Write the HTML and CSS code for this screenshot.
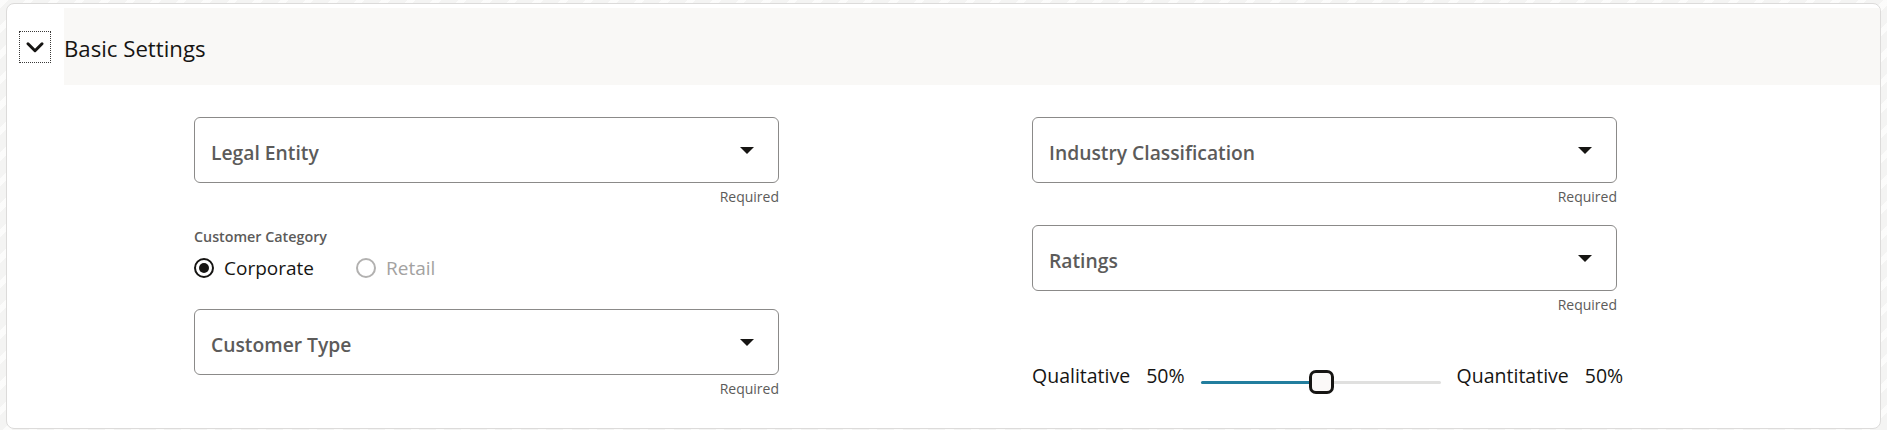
FILE: index.html
```html
<!DOCTYPE html>
<html lang="en">
<head>
<meta charset="utf-8">
<title>Basic Settings</title>
<link rel="stylesheet" href="styles.css">
</head>
<body>
<div class="card">
  <div class="header">
    <div class="toggle-area">
      <button class="toggle" aria-label="Collapse">
        <svg viewBox="0 0 32 32" width="32" height="32" aria-hidden="true">
          <path d="M8.5 12.5 L16 20 L23.5 12.5" fill="none" stroke="#161513" stroke-width="3.2" stroke-linecap="round" stroke-linejoin="round"/>
        </svg>
      </button>
    </div>
    <div class="header-title"><h2 class="title">Basic Settings</h2></div>
  </div>
  <div class="content">
    <div class="col">
      <div class="field">
        <div class="select"><span class="label">Legal Entity</span><span class="caret"></span></div>
        <div class="helper">Required</div>
      </div>
      <div class="radioset">
        <div class="group-label">Customer Category</div>
        <div class="radios">
          <label class="radio"><span class="circle checked"></span>Corporate</label>
          <label class="radio disabled"><span class="circle"></span>Retail</label>
        </div>
      </div>
      <div class="field field-after-radios">
        <div class="select"><span class="label">Customer Type</span><span class="caret"></span></div>
        <div class="helper">Required</div>
      </div>
    </div>
    <div class="col">
      <div class="field">
        <div class="select"><span class="label">Industry Classification</span><span class="caret"></span></div>
        <div class="helper">Required</div>
      </div>
      <div class="field field-next">
        <div class="select"><span class="label">Ratings</span><span class="caret"></span></div>
        <div class="helper">Required</div>
      </div>
      <div class="slider-row">
        <span class="slider-text">Qualitative</span>
        <span class="slider-text">50%</span>
        <div class="slider">
          <div class="track"><div class="fill" style="width:50%"></div></div>
          <div class="thumb" style="left:50%"></div>
        </div>
        <span class="slider-text">Quantitative</span>
        <span class="slider-text">50%</span>
      </div>
    </div>
  </div>
</div>
</body>
</html>
```

FILE: styles.css
```css
* { box-sizing: border-box; }

html, body { height: 100%; }

body {
  margin: 0;
  padding: 3px 6px 2px 6px;
  font-family: "Open Sans", "Noto Sans", sans-serif;
  color: #161513;
  background-color: #f4f4f3;
  background-image: repeating-linear-gradient(135deg, rgba(255,255,255,0.7) 0 6px, rgba(0,0,0,0) 6px 18px);
}

.card {
  width: 1875px;
  height: 426px;
  background: #ffffff;
  border: 1px solid #dcdbda;
  border-radius: 8px;
  overflow: hidden;
}

.header {
  display: flex;
  align-items: stretch;
  height: 77px;
  margin-top: 4px;
}

.toggle-area {
  width: 57px;
  display: flex;
  align-items: center;
  padding-left: 12px;
}

.toggle {
  width: 32px;
  height: 32px;
  padding: 0;
  margin: 0;
  border: 1px dotted #3a3938;
  background: transparent;
  display: flex;
  align-items: center;
  justify-content: center;
}

.toggle svg { display: block; }

.header-title {
  flex: 1;
  background: #f9f8f6;
  display: flex;
  align-items: center;
}

.title {
  margin: 0;
  padding-top: 4px;
  font-size: 22.2px;
  font-weight: 400;
  color: #161513;
}

.content {
  display: grid;
  grid-template-columns: 1fr 1fr;
  padding: 32px 10px 0 187px;
}

.col {
  display: flex;
  flex-direction: column;
}

.field { width: 585px; }

.select {
  height: 66px;
  border: 1px solid #8b8a89;
  border-radius: 6px;
  display: flex;
  align-items: center;
  justify-content: space-between;
  padding: 0 24px 0 16px;
}

.label {
  padding-top: 4px;
  font-size: 19.3px;
  font-weight: 600;
  color: #5c5b5a;
}

.caret {
  width: 0;
  height: 0;
  border-left: 7px solid transparent;
  border-right: 7px solid transparent;
  border-top: 7px solid #161513;
}

.helper {
  margin-top: 5px;
  height: 18px;
  line-height: 18px;
  font-size: 14px;
  color: #5c5b5a;
  text-align: right;
}

.radioset { margin-top: 21px; }

.group-label {
  height: 20px;
  line-height: 20px;
  font-size: 14.3px;
  font-weight: 600;
  color: #5c5b5a;
}

.radios {
  margin-top: 1px;
  height: 40px;
  display: flex;
  align-items: center;
  gap: 42px;
}

.radio {
  display: flex;
  align-items: center;
  gap: 10px;
  font-size: 19px;
  color: #161513;
}

.radio.disabled { color: #a3a2a1; }

.circle {
  width: 20px;
  height: 20px;
  border-radius: 50%;
  border: 2px solid #161513;
  background: #ffffff;
  display: flex;
  align-items: center;
  justify-content: center;
}

.circle.checked::after {
  content: "";
  width: 10px;
  height: 10px;
  border-radius: 50%;
  background: #161513;
}

.radio.disabled .circle { border-color: #b2b1b0; }

.field-after-radios { margin-top: 21px; }

.field-next { margin-top: 19px; }

.slider-row {
  margin-top: 47px;
  height: 28px;
  display: flex;
  align-items: center;
  gap: 16px;
}

.slider-text {
  font-size: 19.5px;
  color: #161513;
}

.slider {
  position: relative;
  width: 240px;
  height: 24px;
  margin-top: 14px;
  display: flex;
  align-items: center;
}

.track {
  width: 100%;
  height: 3px;
  background: #e0e0df;
  border-radius: 2px;
}

.fill {
  height: 100%;
  background: #227e9e;
  border-radius: 2px;
}

.thumb {
  position: absolute;
  top: 0;
  width: 25px;
  height: 24px;
  margin-left: -12px;
  border: 3px solid #161513;
  border-radius: 7px;
  background: #fbf9f8;
}
```
